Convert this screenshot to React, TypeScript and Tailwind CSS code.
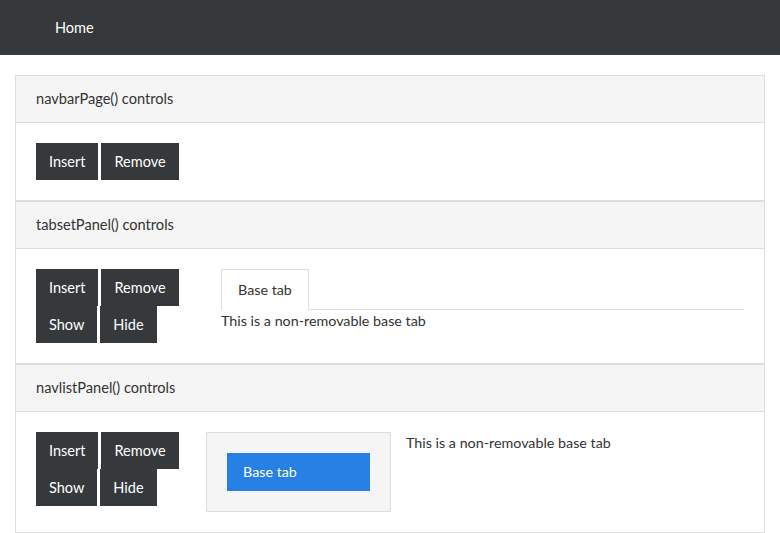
const font = { fontFamily: '"Lato", "Noto Sans", sans-serif' };

function Btn({ label }: { label: string }) {
  return (
    <button className="h-[37px] bg-[#35393c] px-[13px] text-[14.5px] text-white">
      {label}
    </button>
  );
}

function Panel({ title, children }: { title: string; children: React.ReactNode }) {
  return (
    <section className="border border-[#dddddd]">
      <div className="flex h-[47px] items-center border-b border-[#dddddd] bg-[#f5f5f5] px-5 text-[14.6px] text-[#333333]">
        {title}
      </div>
      <div className="p-5">{children}</div>
    </section>
  );
}

function ButtonGrid({ showHide }: { showHide: boolean }) {
  return (
    <div className="flex w-[170px] flex-col">
      <div className="flex gap-[3px]">
        <Btn label="Insert" />
        <Btn label="Remove" />
      </div>
      {showHide && (
        <div className="flex gap-[3px]">
          <Btn label="Show" />
          <Btn label="Hide" />
        </div>
      )}
    </div>
  );
}

export default function App() {
  return (
    <div className="min-h-[533px] bg-white text-[#333333]" style={font}>
      <nav className="flex h-[55px] items-center bg-[#35393c] pl-[55px] text-[14.5px] text-white">
        Home
      </nav>
      <main className="px-[15px] pt-5">
        <Panel title="navbarPage() controls">
          <ButtonGrid showHide={false} />
        </Panel>
        <Panel title="tabsetPanel() controls">
          <div className="flex">
            <ButtonGrid showHide={true} />
            <div className="ml-[15px] flex-1">
              <div className="flex border-b border-[#dddddd]">
                <div className="-mb-px flex h-[41px] items-center border border-b-white border-[#dddddd] bg-white px-4 text-[14.3px]">
                  Base tab
                </div>
              </div>
              <p className="text-[14.3px] leading-[21px]">This is a non-removable base tab</p>
            </div>
          </div>
        </Panel>
        <Panel title="navlistPanel() controls">
          <div className="flex">
            <ButtonGrid showHide={true} />
            <div className="w-[185px] border border-[#dddddd] bg-[#f5f5f5] p-5">
              <div className="flex h-[38px] items-center bg-[#2780e3] px-4 text-[14.3px] text-white">
                Base tab
              </div>
            </div>
            <p className="ml-[15px] text-[14.3px] leading-[21px]">This is a non-removable base tab</p>
          </div>
        </Panel>
      </main>
    </div>
  );
}
